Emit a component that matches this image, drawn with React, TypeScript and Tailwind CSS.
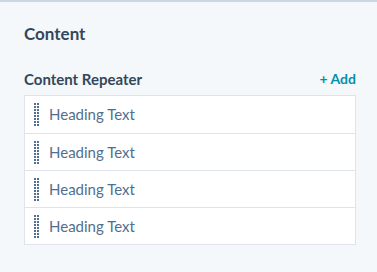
import React from "react";

function Grip() {
  return (
    <div className="grid grid-cols-2 gap-x-[1px] gap-y-[1px] w-[5px]">
      {Array.from({ length: 16 }).map((_, i) => (
        <span key={i} className="block w-[2px] h-[2px] bg-[#516f90]" />
      ))}
    </div>
  );
}

export default function App() {
  const items = ["Heading Text", "Heading Text", "Heading Text", "Heading Text"];
  return (
    <div
      className="min-h-[272px] bg-[#f5f8fa] border-t-2 border-[#cbd6e2] px-6 pt-[22px]"
      style={{ fontFamily: "Lato, 'Noto Sans', sans-serif" }}
    >
      <h1 className="text-[17px] font-bold text-[#33475b] leading-5">Content</h1>
      <div className="flex items-center justify-between w-[332px] mt-[25px] mb-[6px]">
        <h2 className="text-[15px] font-bold text-[#33475b] leading-5">Content Repeater</h2>
        <button className="text-[14px] font-bold text-[#0091ae] leading-5">+ Add</button>
      </div>
      <ul className="bg-white border border-[#dfe3eb] w-[332px]">
        {items.map((t, i) => (
          <li
            key={i}
            className={`flex items-center h-[37px] pl-[9px] gap-[10px] ${i > 0 ? "border-t border-[#dfe3eb]" : ""}`}
          >
            <Grip />
            <span className="text-[15px] text-[#516f90]">{t}</span>
          </li>
        ))}
      </ul>
    </div>
  );
}
